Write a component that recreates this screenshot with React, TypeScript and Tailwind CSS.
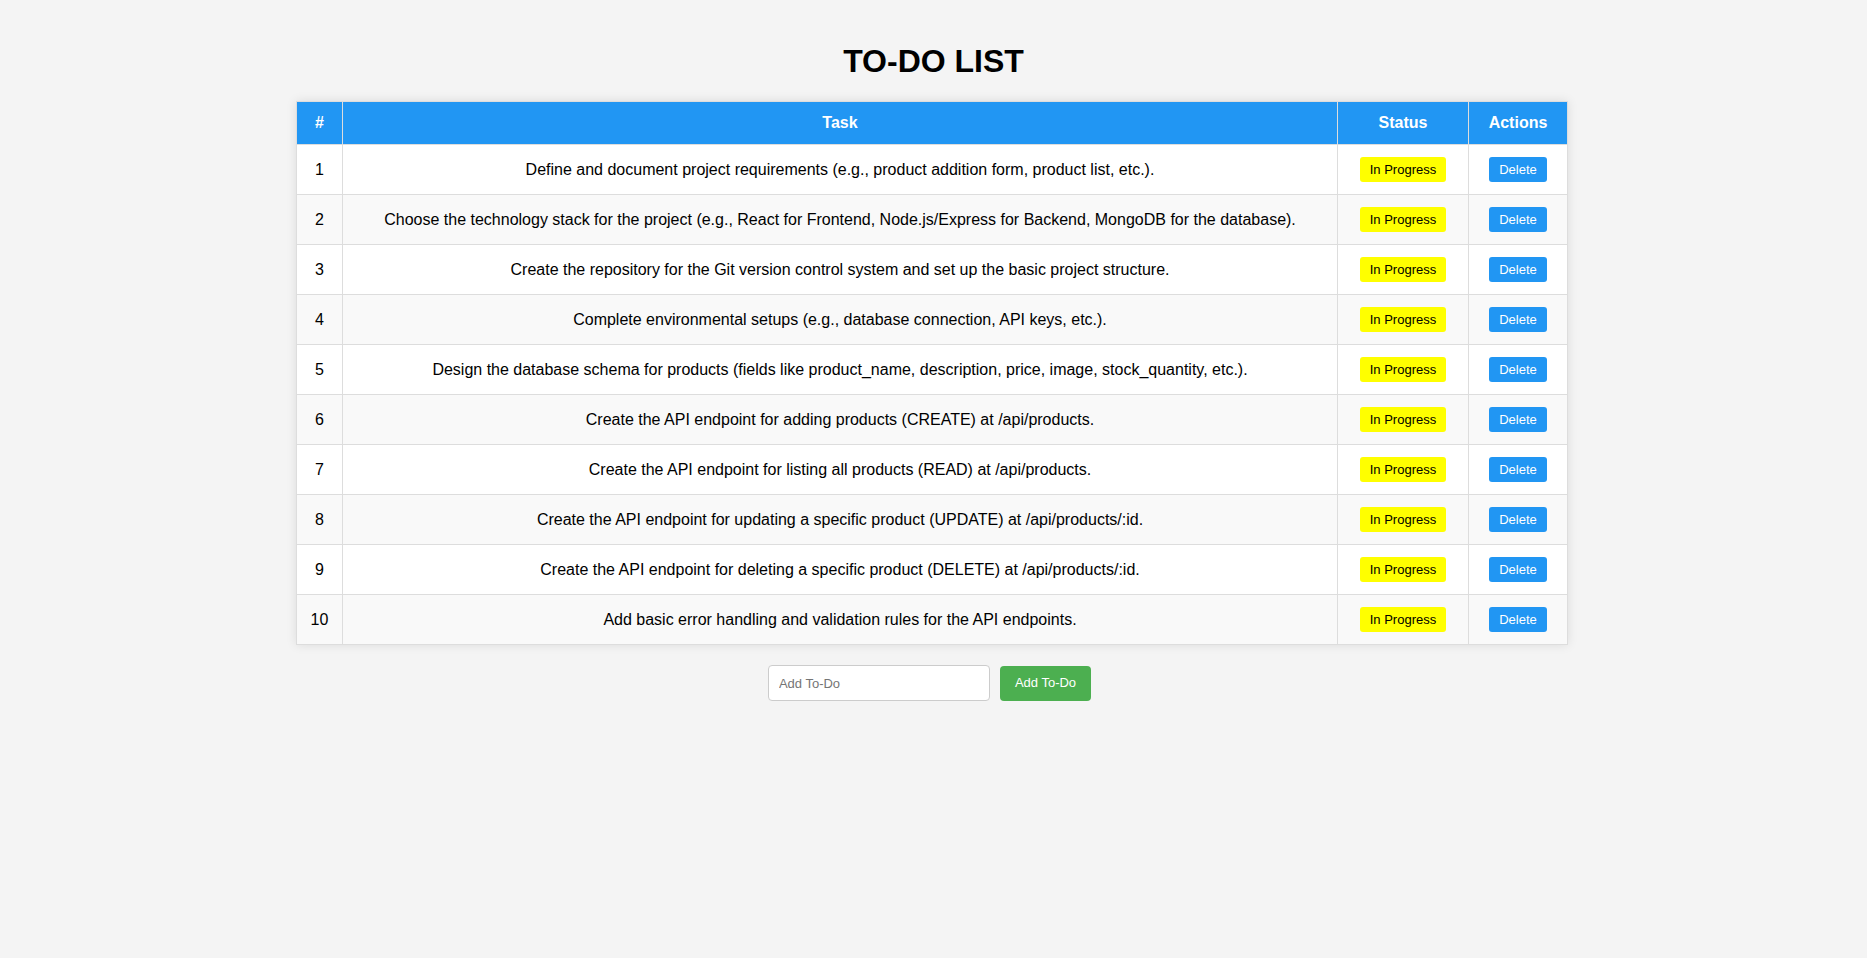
const todos = [
  "Define and document project requirements (e.g., product addition form, product list, etc.).",
  "Choose the technology stack for the project (e.g., React for Frontend, Node.js/Express for Backend, MongoDB for the database).",
  "Create the repository for the Git version control system and set up the basic project structure.",
  "Complete environmental setups (e.g., database connection, API keys, etc.).",
  "Design the database schema for products (fields like product_name, description, price, image, stock_quantity, etc.).",
  "Create the API endpoint for adding products (CREATE) at /api/products.",
  "Create the API endpoint for listing all products (READ) at /api/products.",
  "Create the API endpoint for updating a specific product (UPDATE) at /api/products/:id.",
  "Create the API endpoint for deleting a specific product (DELETE) at /api/products/:id.",
  "Add basic error handling and validation rules for the API endpoints.",
];

export default function App() {
  return (
    <div className="min-h-screen bg-[#f4f4f4] pt-[43px] font-['Liberation_Sans',Arial,sans-serif] text-black">
      <h1 className="text-center text-[32px] leading-[37px] font-bold mb-[21px]">TO-DO LIST</h1>

      {/* Table */}
      <div className="pr-[3px]">
        <div className="w-[1272px] mx-auto border-t border-x border-[#ddd] shadow-[0_0_10px_rgba(0,0,0,0.1)]">
          <div className="grid grid-cols-[46px_995px_131px_98px] h-[43px] bg-[#2196F3] text-white font-bold text-[16px] border-b border-[#ddd]">
            <div className="flex items-center justify-center border-r border-[#ddd]">#</div>
            <div className="flex items-center justify-center border-r border-[#ddd]">Task</div>
            <div className="flex items-center justify-center border-r border-[#ddd]">Status</div>
            <div className="flex items-center justify-center">Actions</div>
          </div>

          {todos.map((task, i) => (
            <div
              key={i}
              className={
                "grid grid-cols-[46px_995px_131px_98px] h-[50px] text-[16px] border-b border-[#ddd] " +
                (i % 2 === 1 ? "bg-[#f9f9f9]" : "bg-white")
              }
            >
              <div className="flex items-center justify-center border-r border-[#ddd]">{i + 1}</div>
              <div className="flex items-center justify-center border-r border-[#ddd] px-3 text-center">{task}</div>
              <div className="flex items-center justify-center border-r border-[#ddd]">
                <span className="bg-[#ffff00] text-black text-[13px] leading-[15px] px-[10px] py-[5px] rounded-[3px]">
                  In Progress
                </span>
              </div>
              <div className="flex items-center justify-center">
                <button className="bg-[#2196F3] text-white text-[13px] leading-[15px] px-[10px] py-[5px] rounded-[3px]">
                  Delete
                </button>
              </div>
            </div>
          ))}
        </div>
      </div>

      {/* Add form */}
      <div className="flex items-center justify-center gap-[10px] mt-[20px] pr-[8px]">
        <input
          type="text"
          placeholder="Add To-Do"
          className="w-[222px] h-[36px] px-[10px] bg-white border border-[#ccc] rounded-[4px] text-[13px] placeholder:text-[#757575] outline-none"
        />
        <button className="h-[35px] px-[15px] bg-[#4CAF50] text-white text-[13px] rounded-[4px]">Add To-Do</button>
      </div>
    </div>
  );
}
